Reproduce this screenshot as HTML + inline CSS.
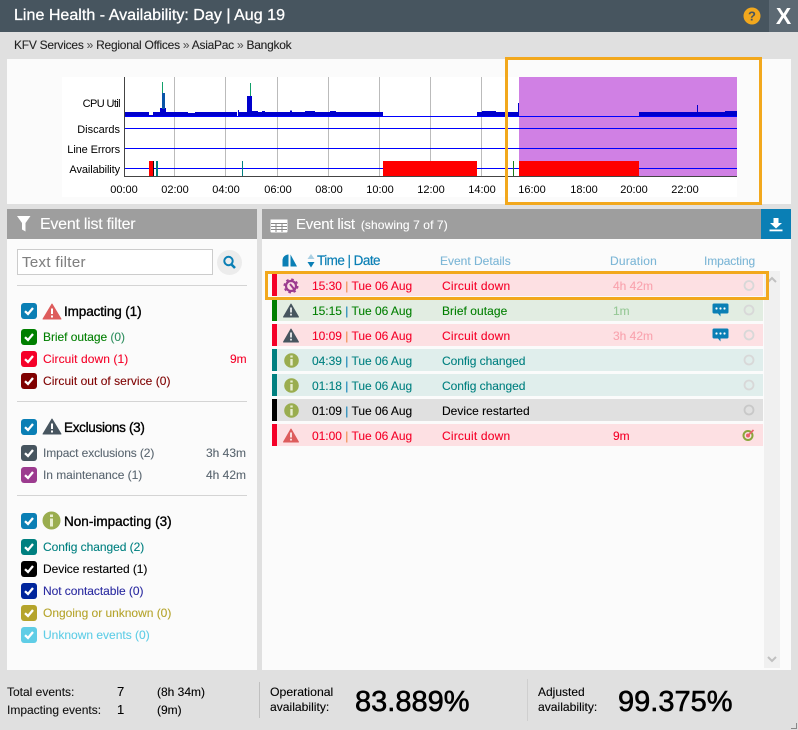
<!DOCTYPE html>
<html><head><meta charset="utf-8"><style>
html,body{margin:0;padding:0}
body{width:798px;height:730px;position:relative;overflow:hidden;background:#e0e0e0;font-family:"Liberation Sans",sans-serif;color:#000}
.a{position:absolute;white-space:nowrap}
.t{position:absolute;white-space:nowrap;font-size:12px;line-height:14px;transform-origin:0 50%;-webkit-text-stroke:.1px}
.cb{position:absolute;left:21px;width:16px;height:16px;border-radius:3px}
.cb svg{position:absolute;left:0;top:0}
.hr{position:absolute;left:17px;width:230px;height:1px;background:#d4d4d4}
.bar{position:absolute;left:272px;width:5px;height:22px}
.row{position:absolute;left:277px;width:486px;height:22px}
.cl{position:absolute;font-size:11px;line-height:13px;font-family:"Liberation Sans",sans-serif;white-space:nowrap}
.tm{width:40px;text-align:center;top:184px}
.rl{right:678px;text-align:right}
</style></head><body>
<div class="a" style="left:0;top:0;width:798px;height:32px;background:#47555f"></div>
<div class="a" style="left:14px;top:6px;font-size:16px;line-height:20px;color:#fff;-webkit-text-stroke:.3px #fff;letter-spacing:.03px">Line Health - Availability: Day | Aug 19</div>
<svg class="a" style="left:743px;top:7px" width="18" height="18"><circle cx="9" cy="9" r="8.5" fill="#f2a81d"/><text x="9" y="13.5" font-size="13" font-weight="bold" text-anchor="middle" fill="#47555f" font-family="Liberation Sans">?</text></svg>
<div class="a" style="left:769px;top:0;width:29px;height:32px;background:#5c6973;color:#fff;font-size:23px;line-height:32px;text-align:center;font-weight:bold">X</div>
<div class="t" style="left:14px;top:38px;color:#222;letter-spacing:-.26px">KFV Services <span style="color:#555">»</span> Regional Offices <span style="color:#555">»</span> AsiaPac <span style="color:#555">»</span> Bangkok</div>

<div class="a" style="left:7px;top:59px;width:784px;height:145px;background:#fbfbfb"></div>
<div class="a" style="left:62px;top:77px;width:675px;height:120px;background:#fff"></div>
<svg class="a" style="left:0;top:0" width="798" height="210" shape-rendering="crispEdges">
<g fill="#bbb"><rect x="174" y="77" width="1" height="99"/><rect x="225" y="77" width="1" height="99"/><rect x="277" y="77" width="1" height="99"/><rect x="328" y="77" width="1" height="99"/><rect x="379" y="77" width="1" height="99"/><rect x="430" y="77" width="1" height="99"/><rect x="481" y="77" width="1" height="99"/></g>
<rect x="519" y="77" width="218" height="99" fill="#d080e4"/>
<g fill="#0000cc">
<rect x="124" y="112" width="25" height="5"/><rect x="149" y="115" width="4" height="2"/><rect x="153" y="112" width="7" height="5"/><rect x="160" y="108" width="6" height="9"/><rect x="166" y="112" width="22" height="5"/><rect x="188" y="113" width="7" height="4"/><rect x="195" y="112" width="42" height="5"/><rect x="238" y="110" width="1" height="7"/><rect x="239" y="112" width="8" height="5"/><rect x="247" y="96" width="5" height="21"/><rect x="252" y="111" width="6" height="6"/><rect x="258" y="112" width="125" height="5"/><rect x="262" y="111" width="3" height="2"/><rect x="290" y="110.500" width="2" height="3"/><rect x="305" y="111" width="10" height="2"/><rect x="330" y="111" width="6" height="2"/><rect x="477" y="112" width="42" height="5"/><rect x="482" y="111" width="14" height="2"/><rect x="518" y="103" width="1" height="14"/><rect x="639" y="112" width="98" height="5"/><rect x="697" y="105" width="1" height="12"/><rect x="725" y="111" width="12" height="2"/>
</g>
<rect x="162" y="93" width="3" height="16" fill="#0a55a8"/>
<rect x="162" y="82" width="1" height="11" fill="#12a06a"/>
<rect x="250" y="83" width="1" height="13" fill="#12a06a"/>
<g fill="#0000ff"><rect x="124" y="116" width="613" height="1"/><rect x="124" y="128" width="613" height="1"/><rect x="124" y="148" width="613" height="1"/><rect x="124" y="168" width="613" height="1"/></g>
<g fill="red"><rect x="149" y="161" width="4" height="15"/><rect x="383" y="161" width="94" height="15"/><rect x="519" y="161" width="120" height="15"/></g>
<g fill="#008080"><rect x="156" y="161" width="2" height="15"/><rect x="242" y="161" width="1" height="15"/></g>
<rect x="153" y="161" width="1" height="15" fill="#111"/>
<rect x="513" y="161" width="1" height="15" fill="#1a7a1a"/>
<rect x="124" y="77" width="1" height="99" fill="#444"/>
<rect x="124" y="176" width="613" height="1" fill="#444"/>
</svg>
<div class="cl rl" style="top:98px;letter-spacing:-.6px">CPU Util</div>
<div class="cl rl" style="top:124px">Discards</div>
<div class="cl rl" style="top:144px;letter-spacing:-.1px">Line Errors</div>
<div class="cl rl" style="top:164px;letter-spacing:-.1px">Availability</div>
<div class="cl tm" style="left:104px">00:00</div><div class="cl tm" style="left:155px">02:00</div><div class="cl tm" style="left:206px">04:00</div><div class="cl tm" style="left:258px">06:00</div><div class="cl tm" style="left:309px">08:00</div><div class="cl tm" style="left:360px">10:00</div><div class="cl tm" style="left:411px">12:00</div><div class="cl tm" style="left:462px">14:00</div><div class="cl tm" style="left:512px">16:00</div><div class="cl tm" style="left:564px">18:00</div><div class="cl tm" style="left:614px">20:00</div><div class="cl tm" style="left:665px">22:00</div>
<div class="a" style="left:505px;top:57px;width:251px;height:142px;border:3px solid #f2a81d"></div>

<!-- left panel -->
<div class="a" style="left:7px;top:209px;width:250px;height:461px;background:#fbfbfb"></div>
<div class="a" style="left:7px;top:209px;width:250px;height:30px;background:#9e9e9e"></div>
<svg class="a" style="left:17px;top:216px" width="14" height="16"><path d="M0 0H13.500L8.500 7V15.500L5 13.500V7Z" fill="#fff"/></svg>
<div class="t" style="left:40px;top:216px;font-size:16px;line-height:18px;color:#fff;letter-spacing:-.25px">Event list filter</div>
<div class="a" style="left:17px;top:249px;width:194px;height:24px;border:1px solid #ccc;background:#fff"></div>
<div class="t" style="left:22px;top:254px;font-size:15px;line-height:17px;color:#808080;letter-spacing:.35px">Text filter</div>
<svg class="a" style="left:217px;top:250px" width="25" height="25"><circle cx="12.500" cy="12.500" r="12.500" fill="#ececec"/><circle cx="11.500" cy="11" r="4.200" fill="none" stroke="#0a7fb5" stroke-width="2"/><path d="M14.500 14.500L18 18" stroke="#0a7fb5" stroke-width="2.600"/></svg>
<div class="hr" style="top:285px"></div><div class="hr" style="top:401px"></div><div class="hr" style="top:495px"></div>

<div class="cb" style="top:303px;background:#0a7fb5"><svg width="16" height="16"><path d="M4 8.200L7 11L12 5" fill="none" stroke="#fff" stroke-width="2.300"/></svg></div>
<svg class="a" style="left:42px;top:303px" width="20" height="17"><path d="M10 1L19 16H1Z" fill="#dd5c5c" stroke="#dd5c5c" stroke-linejoin="round"/><path d="M9 5.500H11V11H9ZM9 12.500H11V14.500H9Z" fill="#fff"/></svg>
<div class="t" style="left:64px;top:304px;font-size:13.500px;line-height:15px;-webkit-text-stroke:.35px #000;letter-spacing:-.1px">Impacting (1)</div>

<div class="cb" style="top:329px;background:#007f00"><svg width="16" height="16"><path d="M4 8.200L7 11L12 5" fill="none" stroke="#fff" stroke-width="2.300"/></svg></div>
<div class="t" style="left:43px;top:330px;color:#007f00;letter-spacing:-.05px">Brief outage <span style="color:#2f8f5f">(0)</span></div>
<div class="cb" style="top:351px;background:#f50028"><svg width="16" height="16"><path d="M4 8.200L7 11L12 5" fill="none" stroke="#fff" stroke-width="2.300"/></svg></div>
<div class="t" style="left:43px;top:352px;color:#f50028;letter-spacing:.08px">Circuit down (1)</div>
<div class="t" style="left:230px;top:352px;color:#f50028">9m</div>
<div class="cb" style="top:373px;background:#7f0000"><svg width="16" height="16"><path d="M4 8.200L7 11L12 5" fill="none" stroke="#fff" stroke-width="2.300"/></svg></div>
<div class="t" style="left:43px;top:374px;color:#7f0000;letter-spacing:.03px">Circuit out of service (0)</div>

<div class="cb" style="top:419px;background:#0a7fb5"><svg width="16" height="16"><path d="M4 8.200L7 11L12 5" fill="none" stroke="#fff" stroke-width="2.300"/></svg></div>
<svg class="a" style="left:42px;top:418px" width="20" height="17"><path d="M10 1L19 16H1Z" fill="#47555f" stroke="#47555f" stroke-linejoin="round"/><path d="M9 5.500H11V11H9ZM9 12.500H11V14.500H9Z" fill="#fff"/></svg>
<div class="t" style="left:64px;top:420px;font-size:13.500px;line-height:15px;-webkit-text-stroke:.35px #000;letter-spacing:-.3px">Exclusions (3)</div>
<div class="cb" style="top:445px;background:#47555f"><svg width="16" height="16"><path d="M4 8.200L7 11L12 5" fill="none" stroke="#fff" stroke-width="2.300"/></svg></div>
<div class="t" style="left:43px;top:446px;color:#5a6670;letter-spacing:-.1px">Impact exclusions (2)</div>
<div class="t" style="left:206px;top:446px;color:#5a6670">3h 43m</div>
<div class="cb" style="top:467px;background:#9c3b8f"><svg width="16" height="16"><path d="M4 8.200L7 11L12 5" fill="none" stroke="#fff" stroke-width="2.300"/></svg></div>
<div class="t" style="left:43px;top:468px;color:#5a6670;letter-spacing:-.05px">In maintenance (1)</div>
<div class="t" style="left:206px;top:468px;color:#5a6670">4h 42m</div>

<div class="cb" style="top:513px;background:#0a7fb5"><svg width="16" height="16"><path d="M4 8.200L7 11L12 5" fill="none" stroke="#fff" stroke-width="2.300"/></svg></div>
<svg class="a" style="left:42px;top:511px" width="19" height="19"><circle cx="9.500" cy="9.500" r="9" fill="#9aad4f"/><path d="M8 3.500H11V6H8ZM8 7.500H11V15.500H8Z" fill="#e8eed0"/></svg>
<div class="t" style="left:64px;top:514px;font-size:13.500px;line-height:15px;-webkit-text-stroke:.35px #000;letter-spacing:.02px">Non-impacting (3)</div>
<div class="cb" style="top:539px;background:#008080"><svg width="16" height="16"><path d="M4 8.200L7 11L12 5" fill="none" stroke="#fff" stroke-width="2.300"/></svg></div>
<div class="t" style="left:43px;top:540px;color:#008080;letter-spacing:-.05px">Config changed (2)</div>
<div class="cb" style="top:561px;background:#000"><svg width="16" height="16"><path d="M4 8.200L7 11L12 5" fill="none" stroke="#fff" stroke-width="2.300"/></svg></div>
<div class="t" style="left:43px;top:562px;color:#000;letter-spacing:-.05px">Device restarted (1)</div>
<div class="cb" style="top:583px;background:#00259c"><svg width="16" height="16"><path d="M4 8.200L7 11L12 5" fill="none" stroke="#fff" stroke-width="2.300"/></svg></div>
<div class="t" style="left:43px;top:584px;color:#2a2aa0;letter-spacing:-.05px">Not contactable (0)</div>
<div class="cb" style="top:605px;background:#b5a42c"><svg width="16" height="16"><path d="M4 8.200L7 11L12 5" fill="none" stroke="#fff" stroke-width="2.300"/></svg></div>
<div class="t" style="left:43px;top:606px;color:#b5a42c;letter-spacing:-.02px">Ongoing or unknown (0)</div>
<div class="cb" style="top:627px;background:#5fcde6"><svg width="16" height="16"><path d="M4 8.200L7 11L12 5" fill="none" stroke="#fff" stroke-width="2.300"/></svg></div>
<div class="t" style="left:43px;top:628px;color:#5fcde6;letter-spacing:0">Unknown events (0)</div>

<!-- right panel -->
<div class="a" style="left:262px;top:209px;width:529px;height:461px;background:#fbfbfb"></div>
<div class="a" style="left:262px;top:209px;width:529px;height:30px;background:#9e9e9e"></div>
<svg class="a" style="left:270px;top:219px" width="18" height="14"><rect x=".5" y=".5" width="17" height="13" fill="#fff" rx="1"/><rect x=".5" y=".5" width="17" height="3" fill="#fff"/><path d="M1 4.500H17M1 7.500H17M1 10.500H17M6 4V13M12 4V13" stroke="#8a8a8a" stroke-width="1"/></svg>
<div class="t" style="left:296px;top:216px;font-size:15px;line-height:18px;color:#fff;letter-spacing:-.2px">Event list <span style="font-size:12px;letter-spacing:.1px;margin-left:2px">(showing 7 of 7)</span></div>
<div class="a" style="left:761px;top:209px;width:30px;height:30px;background:#0a7fb5"></div>
<svg class="a" style="left:769px;top:217px" width="14" height="15"><path d="M4.500 1H9.500V6H13L7 11.500L1 6H4.500Z" fill="#fff"/><rect x="0.500" y="12.500" width="13" height="1.800" fill="#fff"/></svg>

<svg class="a" style="left:281px;top:253px" width="18" height="15"><path d="M7.500 1.500A6 6 0 0 0 1.500 7.500V13.500H7.500Z" fill="#0a7fb5"/><path d="M9.500 1.500L16 13.500H9.500Z" fill="#0a7fb5"/></svg>
<svg class="a" style="left:307px;top:254px" width="8" height="15"><path d="M4 0L7.500 5H.5Z" fill="#a9cfe3"/><path d="M4 13.500L7.500 8H.5Z" fill="#0a7fb5"/></svg>
<div class="t" style="left:317px;top:253px;font-size:13.500px;line-height:16px;color:#0a7fb5;letter-spacing:-.55px;-webkit-text-stroke:.2px #0a7fb5">Time | Date</div>
<div class="t" style="left:440px;top:254px;color:#7cb6d6;letter-spacing:0">Event Details</div>
<div class="t" style="left:610px;top:254px;color:#7cb6d6;letter-spacing:.2px">Duration</div>
<div class="t" style="left:704px;top:254px;color:#7cb6d6;letter-spacing:-.1px">Impacting</div>

<div class="a" style="left:764px;top:271px;width:16px;height:397px;background:#f0f0f0"></div>
<svg class="a" style="left:767px;top:276px" width="10" height="8"><path d="M1 6L5 2L9 6" fill="none" stroke="#c0c0c0" stroke-width="2"/></svg>
<svg class="a" style="left:767px;top:655px" width="10" height="8"><path d="M1 2L5 6L9 2" fill="none" stroke="#c0c0c0" stroke-width="2"/></svg>

<!-- rows -->
<div class="bar" style="top:274px;background:#f50028"></div><div class="row" style="top:274px;background:#fde0e3"></div>
<div class="bar" style="top:299px;background:#007f00"></div><div class="row" style="top:299px;background:#e2ede2"></div>
<div class="bar" style="top:324px;background:#f50028"></div><div class="row" style="top:324px;background:#fde0e3"></div>
<div class="bar" style="top:349px;background:#008080"></div><div class="row" style="top:349px;background:#e0eeec"></div>
<div class="bar" style="top:374px;background:#008080"></div><div class="row" style="top:374px;background:#e0eeec"></div>
<div class="bar" style="top:399px;background:#000"></div><div class="row" style="top:399px;background:#e0e0e0"></div>
<div class="bar" style="top:424px;background:#f50028"></div><div class="row" style="top:424px;background:#fde0e3"></div>

<svg class="a" style="left:283px;top:278px" width="16" height="16"><g fill="none" stroke="#9c3b8f"><circle cx="8" cy="8" r="5" stroke-width="2.200"/><circle cx="8" cy="8" r="6.500" stroke-width="2" stroke-dasharray="2.500 2.600"/><path d="M7 6L11 11" stroke-width="2"/></g></svg>
<svg class="a" style="left:283px;top:303px" width="16" height="15"><path d="M8 1L15.500 14H.5Z" fill="#47555f" stroke="#47555f" stroke-linejoin="round"/><path d="M7.200 4.500H8.800V9.500H7.200ZM7.200 10.800H8.800V12.500H7.200Z" fill="#fff"/></svg>
<svg class="a" style="left:283px;top:328px" width="16" height="15"><path d="M8 1L15.500 14H.5Z" fill="#47555f" stroke="#47555f" stroke-linejoin="round"/><path d="M7.200 4.500H8.800V9.500H7.200ZM7.200 10.800H8.800V12.500H7.200Z" fill="#fff"/></svg>
<svg class="a" style="left:284px;top:353px" width="15" height="15"><circle cx="7.500" cy="7.500" r="7.300" fill="#9aad4f"/><path d="M6.300 2.500H8.700V4.500H6.300ZM6.300 6H8.700V12.500H6.300Z" fill="#e8eed0"/></svg>
<svg class="a" style="left:284px;top:378px" width="15" height="15"><circle cx="7.500" cy="7.500" r="7.300" fill="#9aad4f"/><path d="M6.300 2.500H8.700V4.500H6.300ZM6.300 6H8.700V12.500H6.300Z" fill="#e8eed0"/></svg>
<svg class="a" style="left:284px;top:403px" width="15" height="15"><circle cx="7.500" cy="7.500" r="7.300" fill="#9aad4f"/><path d="M6.300 2.500H8.700V4.500H6.300ZM6.300 6H8.700V12.500H6.300Z" fill="#e8eed0"/></svg>
<svg class="a" style="left:283px;top:428px" width="16" height="15"><path d="M8 1L15.500 14H.5Z" fill="#dd5c5c" stroke="#dd5c5c" stroke-linejoin="round"/><path d="M7.200 4.500H8.800V9.500H7.200ZM7.200 10.800H8.800V12.500H7.200Z" fill="#fff"/></svg>

<div class="t" style="left:312px;top:279px;color:#f50028;letter-spacing:-.02px">15:30 <span style="color:#f08a4a">|</span> Tue 06 Aug</div>
<div class="t" style="left:442px;top:279px;color:#f50028;letter-spacing:.2px">Circuit down</div>
<div class="t" style="left:613px;top:279px;color:#f9a3ae">4h 42m</div>
<div class="t" style="left:312px;top:304px;color:#007f00;letter-spacing:-.02px">15:15 <span style="color:#0a7fb5">|</span> Tue 06 Aug</div>
<div class="t" style="left:442px;top:304px;color:#007f00;letter-spacing:.05px">Brief outage</div>
<div class="t" style="left:613px;top:304px;color:#96c896">1m</div>
<div class="t" style="left:312px;top:329px;color:#f50028;letter-spacing:-.02px">10:09 <span style="color:#f08a4a">|</span> Tue 06 Aug</div>
<div class="t" style="left:442px;top:329px;color:#f50028;letter-spacing:.2px">Circuit down</div>
<div class="t" style="left:613px;top:329px;color:#f9a3ae">3h 42m</div>
<div class="t" style="left:312px;top:354px;color:#008080;letter-spacing:-.02px">04:39 <span style="color:#0a7fb5">|</span> Tue 06 Aug</div>
<div class="t" style="left:442px;top:354px;color:#008080;letter-spacing:-.05px">Config changed</div>
<div class="t" style="left:312px;top:379px;color:#008080;letter-spacing:-.02px">01:18 <span style="color:#0a7fb5">|</span> Tue 06 Aug</div>
<div class="t" style="left:442px;top:379px;color:#008080;letter-spacing:-.05px">Config changed</div>
<div class="t" style="left:312px;top:404px;color:#000;letter-spacing:-.02px">01:09 <span style="color:#0a7fb5">|</span> Tue 06 Aug</div>
<div class="t" style="left:442px;top:404px;color:#000;letter-spacing:.02px">Device restarted</div>
<div class="t" style="left:312px;top:429px;color:#f50028;letter-spacing:-.02px">01:00 <span style="color:#f08a4a">|</span> Tue 06 Aug</div>
<div class="t" style="left:442px;top:429px;color:#f50028;letter-spacing:.2px">Circuit down</div>
<div class="t" style="left:613px;top:429px;color:#f50028">9m</div>

<svg class="a" style="left:740px;top:274px" width="18" height="172"><g fill="none" stroke="#d8d8d8" stroke-width="1.800"><circle cx="9" cy="11.500" r="4.500"/><circle cx="9" cy="36" r="4.500"/><circle cx="9" cy="61" r="4.500"/><circle cx="9" cy="86" r="4.500"/><circle cx="9" cy="111" r="4.500"/><circle cx="9" cy="136" stroke="#c8c8c8" r="4.500"/></g>
<circle cx="8" cy="161.500" r="4.500" fill="none" stroke="#8aa63c" stroke-width="2"/><circle cx="8" cy="161.500" r="2" fill="#e8606a"/><path d="M8.500 161L13.500 156" stroke="#e8606a" stroke-width="1.600"/></svg>
<svg class="a" style="left:712px;top:303px" width="17" height="14"><path d="M2 .5H15A1.500 1.500 0 0 1 16.500 2V9A1.500 1.500 0 0 1 15 10.500H8.500V13.500L6 10.500H2A1.500 1.500 0 0 1 .5 9V2A1.500 1.500 0 0 1 2 .5Z" fill="#0a7fb5"/><circle cx="4.500" cy="5.500" r="1.100" fill="#fff"/><circle cx="8.500" cy="5.500" r="1.100" fill="#fff"/><circle cx="12.500" cy="5.500" r="1.100" fill="#fff"/></svg>
<svg class="a" style="left:712px;top:328px" width="17" height="14"><path d="M2 .5H15A1.500 1.500 0 0 1 16.500 2V9A1.500 1.500 0 0 1 15 10.500H8.500V13.500L6 10.500H2A1.500 1.500 0 0 1 .5 9V2A1.500 1.500 0 0 1 2 .5Z" fill="#0a7fb5"/><circle cx="4.500" cy="5.500" r="1.100" fill="#fff"/><circle cx="8.500" cy="5.500" r="1.100" fill="#fff"/><circle cx="12.500" cy="5.500" r="1.100" fill="#fff"/></svg>
<div class="a" style="left:265px;top:271px;width:498px;height:23px;border:3px solid #f2a81d"></div>

<!-- footer -->
<div class="t" style="left:7px;top:685px;color:#111">Total events:</div>
<div class="t" style="left:7px;top:703px;color:#111">Impacting events:</div>
<div class="t" style="left:117px;top:685px;font-size:13px">7</div>
<div class="t" style="left:117px;top:703px;font-size:13px">1</div>
<div class="t" style="left:157px;top:685px">(8h 34m)</div>
<div class="t" style="left:157px;top:703px">(9m)</div>
<div class="a" style="left:259px;top:682px;width:1px;height:36px;background:#c0c0c0"></div>
<div class="a" style="left:527px;top:679px;width:1px;height:42px;background:#cfcfcf"></div>
<div class="t" style="left:270px;top:685px;transform:scaleX(1.02)">Operational</div>
<div class="t" style="left:270px;top:700px;transform:scaleX(1.01)">availability:</div>
<div class="t" style="left:538px;top:685px">Adjusted</div>
<div class="t" style="left:538px;top:700px;transform:scaleX(1.01)">availability:</div>
<div class="t" style="left:355px;top:685px;font-size:29px;line-height:34px;-webkit-text-stroke:.6px #000;letter-spacing:0">83.889%</div>
<div class="t" style="left:618px;top:685px;font-size:29px;line-height:34px;-webkit-text-stroke:.6px #000;letter-spacing:0">99.375%</div>
<svg class="a" style="left:790px;top:722px" width="8" height="8"><path d="M6.500 1V6.500H1" fill="none" stroke="#888" stroke-width="1"/></svg>
</body></html>
